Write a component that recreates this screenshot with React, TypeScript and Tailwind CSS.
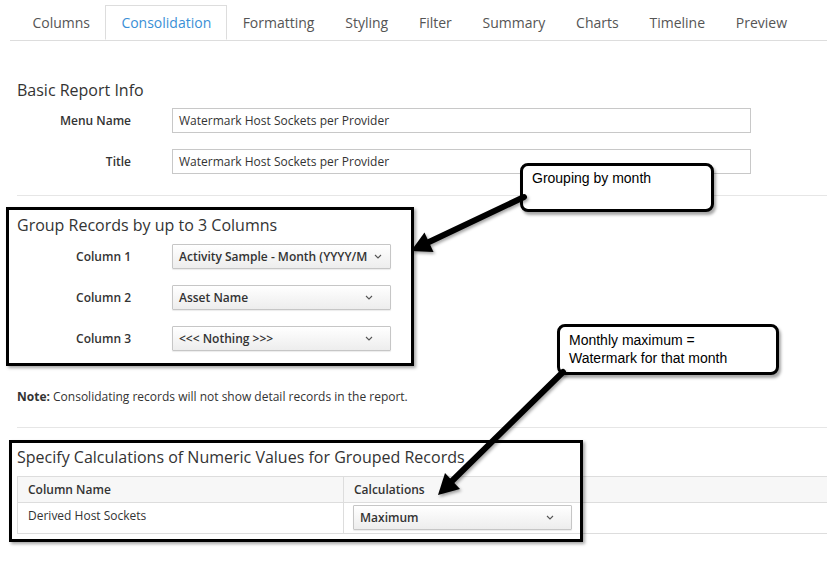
import React from 'react';

const tabs = ['Columns', 'Consolidation', 'Formatting', 'Styling', 'Filter', 'Summary', 'Charts', 'Timeline', 'Preview'];

const Chevron = () => (
  <svg width="8" height="5" viewBox="0 0 8 5" className="shrink-0">
    <path d="M1 1 L4 4 L7 1" fill="none" stroke="#555" strokeWidth="1.1" />
  </svg>
);

const SelectBox = ({ value, width = 'w-[219px]', tight = false }: { value: string; width?: string; tight?: boolean }) => (
  <div
    className={`${width} h-[25px] flex items-center border border-[#c6c6c6] rounded-[1px] bg-gradient-to-b from-white to-[#ededed] shadow-[0_1px_1px_rgba(0,0,0,0.08)] pl-[6px] ${tight ? 'pr-[8px]' : 'pr-[17px]'}`}
  >
    <span className="flex-1 whitespace-nowrap text-[12px] font-semibold text-[#333]">{value}</span>
    <Chevron />
  </div>
);

const FormRow = ({ label, children }: { label: string; children: React.ReactNode }) => (
  <div className="flex items-center">
    <label className="w-[114px] mr-[41px] text-right text-[12px] font-semibold text-[#333]">{label}</label>
    {children}
  </div>
);

const TextInput = ({ value }: { value: string }) => (
  <div className="w-[579px] h-[25px] flex items-center border border-[#c8c8c8] bg-white pl-[6px] text-[12px] text-[#333]">
    {value}
  </div>
);

export default function App() {
  return (
    <div className="relative w-[827px] h-[565px] overflow-hidden bg-white font-['Open_Sans',sans-serif] text-[#333]">
      {/* tabs */}
      <ul className="mt-[5px] ml-[10px] flex border-b border-[#ddd] pl-[7px]">
        {tabs.map((t) => (
          <li
            key={t}
            className={
              t === 'Consolidation'
                ? 'h-[35px] -mb-px px-[15px] flex items-center bg-white border border-[#ddd] border-b-white text-[14px] text-[#3a8fd6]'
                : 'h-[35px] px-[15.4px] flex items-center text-[14px] text-[#555]'
            }
          >
            {t}
          </li>
        ))}
      </ul>

      <div className="pl-[17px]">
        <h2 className="mt-[38px] text-[16px] leading-[22px] font-normal text-[#333]">Basic Report Info</h2>
        <div className="mt-[7px] flex flex-col gap-[16px]">
          <FormRow label="Menu Name">
            <TextInput value="Watermark Host Sockets per Provider" />
          </FormRow>
          <FormRow label="Title">
            <TextInput value="Watermark Host Sockets per Provider" />
          </FormRow>
        </div>

        <div className="mt-[21px] border-t border-[#e6e6e6]" />

        <h2 className="mt-[18px] text-[16px] leading-[22px] font-normal text-[#333]">Group Records by up to 3 Columns</h2>
        <div className="mt-[8px] flex flex-col gap-[16px]">
          <FormRow label="Column 1">
            <SelectBox value="Activity Sample - Month (YYYY/M" tight />
          </FormRow>
          <FormRow label="Column 2">
            <SelectBox value="Asset Name" />
          </FormRow>
          <FormRow label="Column 3">
            <SelectBox value="<<< Nothing >>>" />
          </FormRow>
        </div>

        <p className="mt-[38px] text-[12px] leading-[16px] text-[#333]">
          <span className="font-bold">Note:</span> Consolidating records will not show detail records in the report.
        </p>

        <div className="mt-[22px] border-t border-[#e6e6e6]" />

        <h2 className="mt-[18px] text-[16px] leading-[22px] font-normal text-[#333]">
          Specify Calculations of Numeric Values for Grouped Records
        </h2>
        <table className="mt-[8px] w-[830px] border-collapse text-[12px]">
          <thead>
            <tr className="bg-[#f7f7f7]">
              <th className="w-[326px] h-[26px] border border-[#ddd] pl-[10px] text-left font-semibold">Column Name</th>
              <th className="h-[26px] border border-[#ddd] pl-[10px] text-left font-semibold">Calculations</th>
            </tr>
          </thead>
          <tbody>
            <tr>
              <td className="h-[31px] border border-[#ddd] pl-[10px] align-top pt-[4px]">Derived Host Sockets</td>
              <td className="h-[31px] border border-[#ddd] pl-[9px] align-top pt-[2px]">
                <SelectBox value="Maximum" />
              </td>
            </tr>
          </tbody>
        </table>
      </div>

      {/* annotation frames */}
      <div className="absolute left-[6px] top-[207px] w-[408px] h-[159px] border-[3px] border-black shadow-[2px_2px_3px_rgba(0,0,0,0.35)]" />
      <div className="absolute left-[9px] top-[440px] w-[574px] h-[102px] border-[3px] border-black shadow-[2px_2px_3px_rgba(0,0,0,0.35)]" />

      {/* callouts */}
      <div className="absolute left-[520px] top-[163px] w-[194px] h-[49px] rounded-[8px] border-[3px] border-black bg-white px-[9px] pt-[3px] font-['Liberation_Sans',Arial,sans-serif] text-[14px] leading-[18px] text-black shadow-[2px_3px_3px_rgba(0,0,0,0.35)]">
        Grouping by month
      </div>
      <div className="absolute left-[557px] top-[324px] w-[222px] h-[51px] rounded-[8px] border-[3px] border-black bg-white px-[9px] pt-[4px] font-['Liberation_Sans',Arial,sans-serif] text-[14px] leading-[18px] text-black shadow-[2px_3px_3px_rgba(0,0,0,0.35)]">
        Monthly maximum =<br />
        Watermark for that month
      </div>

      {/* arrows */}
      <svg className="absolute inset-0 pointer-events-none" width="827" height="565">
        <defs>
          <filter id="sh" x="-20%" y="-20%" width="140%" height="140%">
            <feDropShadow dx="1.5" dy="2" stdDeviation="1.5" floodOpacity="0.35" />
          </filter>
        </defs>
        <g filter="url(#sh)">
          <line x1="524" y1="197" x2="429" y2="242" stroke="black" strokeWidth="6" strokeLinecap="round" />
          <polygon points="411,251 433.5,252 424.5,232.5" fill="black" />
          <line x1="563" y1="372" x2="452" y2="481" stroke="black" strokeWidth="6" strokeLinecap="round" />
          <polygon points="438,495 460,489 445,473" fill="black" />
        </g>
      </svg>
    </div>
  );
}
